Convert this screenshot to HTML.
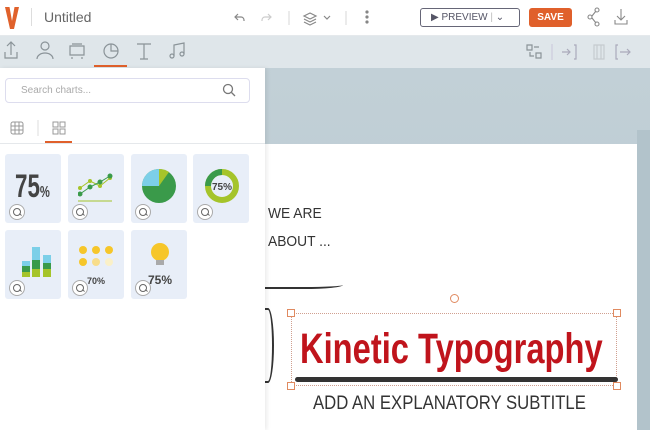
<!DOCTYPE html><html><head><style>
*{margin:0;padding:0;box-sizing:border-box}
body{width:650px;height:430px;overflow:hidden;font-family:"Liberation Sans",sans-serif;position:relative;background:#c0cfd6}
.a{position:absolute}
.tile{position:absolute;width:56px;height:69px;background:#e8eef8;border-radius:3px}
.zm{position:absolute;left:4px;bottom:3px;width:16px;height:16px;border-radius:50%;background:#fff;border:1px solid #aaa}
.zm:after{content:"";position:absolute;left:3px;top:3px;width:6px;height:6px;border:1px solid #666;border-radius:50%}
.zm:before{content:"";position:absolute;left:9px;top:9px;width:3px;height:1px;background:#666;transform:rotate(45deg)}
.h{position:absolute;width:8px;height:8px;border:1px solid #e08a60;background:#fff}
</style></head><body>
<div class="a" style="left:0;top:0;width:650px;height:36px;background:#fff;border-bottom:1px solid #e5e9ec"></div>
<svg class="a" style="left:5px;top:7px" width="14" height="22"><path d="M0 0h4.5l2.5 14 2.5-14H14L9 22H5z" fill="#e0612b"/></svg>
<div class="a" style="left:31px;top:8px;width:1px;height:18px;background:#ddd"></div>
<div class="a" style="left:44px;top:9px;font-size:14px;color:#666">Untitled</div>
<svg class="a" style="left:230px;top:8px" width="150" height="20" fill="none" stroke="#888" stroke-width="1.2">
<path d="M8 6l-3 3 3 3M5 9h6a3 3 0 0 1 3 3v1"/><path d="M38 6l3 3-3 3M41 9h-6a3 3 0 0 0-3 3v1" stroke="#ccc"/>
<path d="M59 3v14" stroke="#ddd"/><path d="M80 5l6 3-6 3-6-3zM74 11l6 3 6-3M74 14l6 3 6-3"/><path d="M94 8l3 3 3-3"/>
<path d="M116 3v14" stroke="#ddd"/><circle cx="137" cy="4" r="1" fill="#777"/><circle cx="137" cy="9" r="1" fill="#777"/><circle cx="137" cy="14" r="1" fill="#777"/></svg>
<div class="a" style="left:420px;top:8px;width:100px;height:19px;border:1px solid #667;border-radius:3px;font-size:10px;color:#556;line-height:17px;padding-left:10px">▶ PREVIEW <span style="color:#bbb">|</span> ⌄</div>
<div class="a" style="left:529px;top:8px;width:43px;height:19px;background:#e0602b;border-radius:3px;color:#fff;font:bold 10px 'Liberation Sans';line-height:19px;text-align:center">SAVE</div>
<svg class="a" style="left:585px;top:6px" width="60" height="22" fill="none" stroke="#888" stroke-width="1.1"><circle cx="12" cy="4" r="2"/><circle cx="5" cy="11" r="2"/><circle cx="12" cy="18" r="2"/><path d="M7 10l4-5M7 12l4 5"/><path d="M36 3v11M32 10l4 4 4-4M30 14v4h12v-4"/></svg>
<div class="a" style="left:0;top:36px;width:650px;height:32px;background:#dfe6ea"></div>
<svg class="a" style="left:0;top:36px" width="650" height="32" fill="none" stroke="#8a9398" stroke-width="1.2">
<path d="M11 6v13M7 10l4-4 4 4M5 16v6h12v-6"/><circle cx="45" cy="10" r="4"/><path d="M37 23a8 6 0 0 1 16 0"/>
<path d="M70 10h14v9H70zM72 8h10M72 21v2M82 21v2"/><circle cx="111" cy="15" r="7"/><path d="M111 8v7h7"/>
<path d="M137 8h14M144 8v15M140 23h8"/><path d="M174 20V9l10-2v11"/><circle cx="172" cy="20" r="2"/><circle cx="182" cy="18" r="2"/>
<path d="M527 9h5v5h-5zM536 17h5v5h-5zM534 11h5M530 16v4h4" /><path d="M552 8v16" stroke="#ccd"/><path d="M562 16h8M567 13l3 3-3 3M574 9h2v14h-2" stroke="#aab"/>
<path d="M594 9h10v14h-10zM597 9v14M601 9v14" stroke="#c5cbcf"/><path d="M618 9h-2v14h2M620 16h10M627 13l3 3-3 3" stroke="#aab"/></svg>
<div class="a" style="left:94px;top:65px;width:33px;height:2px;background:#e0602b"></div>
<div class="a" style="left:265px;top:68px;width:385px;height:362px;background:linear-gradient(#c2d0d7,#b9c9d0)"></div>
<div class="a" style="left:637px;top:130px;width:13px;height:300px;background:#b2c3cb"></div>
<div class="a" style="left:265px;top:144px;width:372px;height:286px;background:#fff"></div>
<div class="a" style="left:268px;top:200px;font-size:15px;color:#333;line-height:28px;transform:scaleX(.92);transform-origin:left">WE ARE<br>ABOUT ...</div>
<div class="a" style="left:265px;top:281px;width:78px;height:8px;border-bottom:2px solid #333;border-radius:0 0 50% 0"></div>
<div class="a" style="left:262px;top:308px;width:12px;height:75px;border:2px solid #333;border-left:none;border-radius:0 50% 50% 0"></div>
<div class="a" style="left:450px;top:294px;width:9px;height:9px;border:1px solid #e08a60;border-radius:50%"></div>
<div class="a" style="left:291px;top:313px;width:326px;height:73px;border:1px dotted #d0a090"></div>
<div class="h" style="left:287px;top:309px"></div><div class="h" style="left:613px;top:309px"></div><div class="h" style="left:287px;top:382px"></div><div class="h" style="left:613px;top:382px"></div>
<div class="a" style="left:300px;top:326px;font:bold 43px 'Liberation Sans';color:#c0141c;transform:scaleX(.76);transform-origin:left;white-space:nowrap;line-height:46px">Kinetic Typography</div>
<div class="a" style="left:295px;top:377px;width:323px;height:5px;background:#333;border-radius:3px"></div>
<div class="a" style="left:313px;top:393px;font-size:19px;color:#333;transform:scaleX(.88);transform-origin:left;white-space:nowrap">ADD AN EXPLANATORY SUBTITLE</div>
<div class="a" style="left:0;top:68px;width:265px;height:362px;background:#fff;box-shadow:2px 0 4px rgba(0,0,0,.08)"></div>
<div class="a" style="left:5px;top:78px;width:245px;height:25px;border:1px solid #dde;border-radius:4px;font-size:10px;color:#aaa;line-height:23px;padding-left:15px">Search charts...</div>
<svg class="a" style="left:222px;top:83px" width="14" height="14" fill="none" stroke="#777" stroke-width="1.3"><circle cx="6" cy="6" r="4.5"/><path d="M9.5 9.5L13 13"/></svg>
<svg class="a" style="left:10px;top:120px" width="60" height="16" fill="none" stroke="#999" stroke-width="1"><rect x="1" y="2" width="12" height="12" rx="2"/><path d="M5 2v12M9 2v12M1 6h12M1 10h12"/><path d="M28 0v16" stroke="#ddd"/><rect x="43" y="2" width="5" height="5"/><rect x="50" y="2" width="5" height="5"/><rect x="43" y="9" width="5" height="5"/><rect x="50" y="9" width="5" height="5"/></svg>
<div class="a" style="left:45px;top:141px;width:27px;height:2px;background:#e0602b"></div>
<div class="a" style="left:0;top:143px;width:265px;height:1px;background:#e5e8eb"></div>
<div class="tile" style="left:5px;top:154px"><div class="a" style="left:10px;top:14px;font:bold 32px 'Liberation Sans';color:#444;transform:scaleX(.7);transform-origin:left">75<span style="font-size:16px">%</span></div><div class="zm"></div></div>
<div class="tile" style="left:68px;top:154px"><svg class="a" style="left:10px;top:18px" width="36" height="30" fill="#3a9a4a" stroke="#3a9a4a"><path d="M2 16L12 9 22 14 32 6" fill="none" stroke="#a5c42a"/><path d="M2 22L12 15 22 10 32 4" fill="none"/><circle cx="2" cy="16" r="2" fill="#a5c42a" stroke="none"/><circle cx="12" cy="9" r="2" fill="#a5c42a" stroke="none"/><circle cx="22" cy="14" r="2" fill="#a5c42a" stroke="none"/><circle cx="32" cy="6" r="2" fill="#a5c42a" stroke="none"/><circle cx="2" cy="22" r="2"/><circle cx="12" cy="15" r="2"/><circle cx="22" cy="10" r="2"/><circle cx="32" cy="4" r="2"/><path d="M0 29h34" stroke="#a5c42a"/></svg><div class="zm"></div></div>
<div class="tile" style="left:131px;top:154px"><svg class="a" style="left:10px;top:14px" width="36" height="36"><circle cx="18" cy="18" r="17" fill="#3a9a4a"/><path d="M18 18V1A17 17 0 0 0 1 18z" fill="#7ccfe8"/><path d="M18 18V1a17 17 0 0 1 10 3z" fill="#a5c42a"/></svg><div class="zm"></div></div>
<div class="tile" style="left:193px;top:154px"><svg class="a" style="left:11px;top:14px" width="36" height="36" fill="none"><circle cx="18" cy="18" r="14" stroke="#a5c42a" stroke-width="6"/><path d="M18 4A14 14 0 0 0 4 18" stroke="#3a9a4a" stroke-width="6"/><text x="18" y="22" font-size="10" font-weight="bold" fill="#444" text-anchor="middle" font-family="Liberation Sans">75%</text></svg><div class="zm"></div></div>
<div class="tile" style="left:5px;top:230px"><svg class="a" style="left:12px;top:15px" width="36" height="36"><rect x="5" y="16" width="8" height="5" fill="#7ccfe8"/><rect x="5" y="21" width="8" height="6" fill="#3a9a4a"/><rect x="5" y="27" width="8" height="5" fill="#a5c42a"/><rect x="15" y="2" width="8" height="13" fill="#7ccfe8"/><rect x="15" y="15" width="8" height="9" fill="#3a9a4a"/><rect x="15" y="24" width="8" height="8" fill="#a5c42a"/><rect x="26" y="10" width="8" height="8" fill="#7ccfe8"/><rect x="26" y="18" width="8" height="6" fill="#3a9a4a"/><rect x="26" y="24" width="8" height="8" fill="#a5c42a"/></svg><div class="zm"></div></div>
<div class="tile" style="left:68px;top:230px"><svg class="a" style="left:10px;top:15px" width="36" height="40" fill="#f6c62a"><circle cx="5" cy="5" r="4"/><circle cx="18" cy="5" r="4"/><circle cx="31" cy="5" r="4"/><circle cx="5" cy="17" r="4"/><circle cx="18" cy="17" r="4" fill="#f8dd8a"/><circle cx="31" cy="17" r="4" fill="#faf0c8"/><text x="18" y="39" font-size="9" font-weight="bold" fill="#444" text-anchor="middle" font-family="Liberation Sans">70%</text></svg><div class="zm"></div></div>
<div class="tile" style="left:131px;top:230px"><svg class="a" style="left:16px;top:12px" width="26" height="46"><circle cx="13" cy="10" r="9" fill="#f6c62a"/><rect x="9" y="18" width="8" height="5" fill="#aaa"/><text x="13" y="42" font-size="12" font-weight="bold" fill="#444" text-anchor="middle" font-family="Liberation Sans">75%</text></svg><div class="zm"></div></div>
</body></html>
